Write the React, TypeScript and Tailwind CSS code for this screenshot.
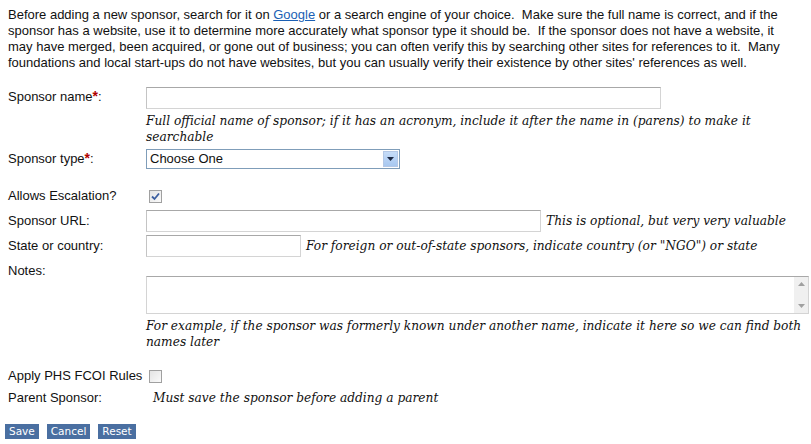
import React from 'react';

const sans = "font-['Liberation_Sans',Arial,sans-serif]";
const serif = "font-['DejaVu_Serif',Georgia,serif] italic text-[12.2px]";

const Req = () => <span className="text-[#b00000] font-bold text-[14px] leading-none">*</span>;

const TextBox = ({ w }: { w: string }) => (
  <div className={`${w} h-[22px] bg-white border border-[#d4d4d4] border-t-[#a8a8a8] border-l-[#c4c4c4]`} />
);

const Check = ({ on }: { on?: boolean }) => (
  <div className="w-[13px] h-[13px] border border-[#a0a0a0] bg-gradient-to-br from-[#e4e4e4] to-[#fafafa] flex items-center justify-center">
    {on && (
      <svg width="9" height="9" viewBox="0 0 9 9">
        <path d="M1 4.5 L3.5 7 L8 1.5" fill="none" stroke="#3c5fa0" strokeWidth="1.8" />
      </svg>
    )}
  </div>
);

const App = () => {
  return (
    <div className={`${sans} text-[13px] leading-[16px] text-[#111] px-[8px] w-[811px] h-[444px] bg-white`}>
      <p className="pt-[7px] w-[790px]">
        Before adding a new sponsor, search for it on{' '}
        <a className="text-[#1a5fb4] underline">Google</a> or a search engine of your choice.&nbsp; Make
        sure the full name is correct, and if the sponsor has a website, use it to determine more accurately
        what sponsor type it should be.&nbsp; If the sponsor does not have a website, it may have merged, been
        acquired, or gone out of business; you can often verify this by searching other sites for references
        to it.&nbsp; Many foundations and local start-ups do not have websites, but you can usually verify
        their existence by other sites' references as well.
      </p>

      <div className="flex mt-[16px]">
        <div className="w-[138px] pt-[2px]">Sponsor name<Req />:</div>
        <TextBox w="w-[515px]" />
      </div>
      <div className={`${serif} ml-[138px] mt-[4px] w-[620px]`}>
        Full official name of sponsor; if it has an acronym, include it after the name in (parens) to make it
        searchable
      </div>

      <div className="flex mt-[4px] items-center">
        <div className="w-[138px]">Sponsor type<Req />:</div>
        <div className="w-[254px] h-[20px] border border-[#7f9db9] flex items-center justify-between bg-white">
          <span className="pl-[3px]">Choose One</span>
          <div className="w-[15px] h-[16px] mr-[1px] border border-[#b4c8e6] bg-gradient-to-b from-[#c6dcf8] to-[#a8c8f0] flex items-center justify-center">
            <svg width="7" height="4" viewBox="0 0 7 4">
              <path d="M0 0 H7 L3.5 4 Z" fill="#1e2a44" />
            </svg>
          </div>
        </div>
      </div>

      <div className="flex mt-[19px] items-center">
        <div className="w-[141px]">Allows Escalation?</div>
        <Check on />
      </div>

      <div className="flex mt-[6px] items-center">
        <div className="w-[138px]">Sponsor URL:</div>
        <TextBox w="w-[395px]" />
        <span className={`${serif} ml-[5px]`}>This is optional, but very very valuable</span>
      </div>

      <div className="flex mt-[3px] items-center">
        <div className="w-[138px]">State or country:</div>
        <TextBox w="w-[155px]" />
        <span className={`${serif} ml-[5px]`}>
          For foreign or out-of-state sponsors, indicate country (or "NGO") or state
        </span>
      </div>

      <div className="mt-[7px] leading-[14px]">Notes:</div>
      <div className="ml-[138px] -mt-[2px] w-[663px] h-[38px] bg-white border border-[#d4d4d4] border-t-[#a8a8a8] flex justify-end">
        <div className="w-[14px] h-full bg-[#f0f0f0] flex flex-col items-center justify-between py-[5px]">
          <svg width="7" height="4" viewBox="0 0 7 4">
            <path d="M0 4 H7 L3.5 0 Z" fill="#a0a0a0" />
          </svg>
          <svg width="7" height="4" viewBox="0 0 7 4">
            <path d="M0 0 H7 L3.5 4 Z" fill="#a0a0a0" />
          </svg>
        </div>
      </div>
      <div className={`${serif} ml-[138px] mt-[4px] w-[665px]`}>
        For example, if the sponsor was formerly known under another name, indicate it here so we can find both
        names later
      </div>

      <div className="flex mt-[18px] items-center">
        <div className="w-[141px]">Apply PHS FCOI Rules</div>
        <Check />
      </div>

      <div className="flex mt-[6px] items-center">
        <div className="w-[145px]">Parent Sponsor:</div>
        <span className={serif}>Must save the sponsor before adding a parent</span>
      </div>

      <div className="flex gap-[8px] mt-[18px] -ml-[3px] font-['DejaVu_Sans',Verdana,sans-serif] text-[10.5px] text-white">
        <button className="bg-[#4a6fa1] h-[15px] px-[4px] leading-[15px]">Save</button>
        <button className="bg-[#4a6fa1] h-[15px] px-[4px] leading-[15px]">Cancel</button>
        <button className="bg-[#4a6fa1] h-[15px] px-[4px] leading-[15px]">Reset</button>
      </div>
    </div>
  );
};

export default App;
